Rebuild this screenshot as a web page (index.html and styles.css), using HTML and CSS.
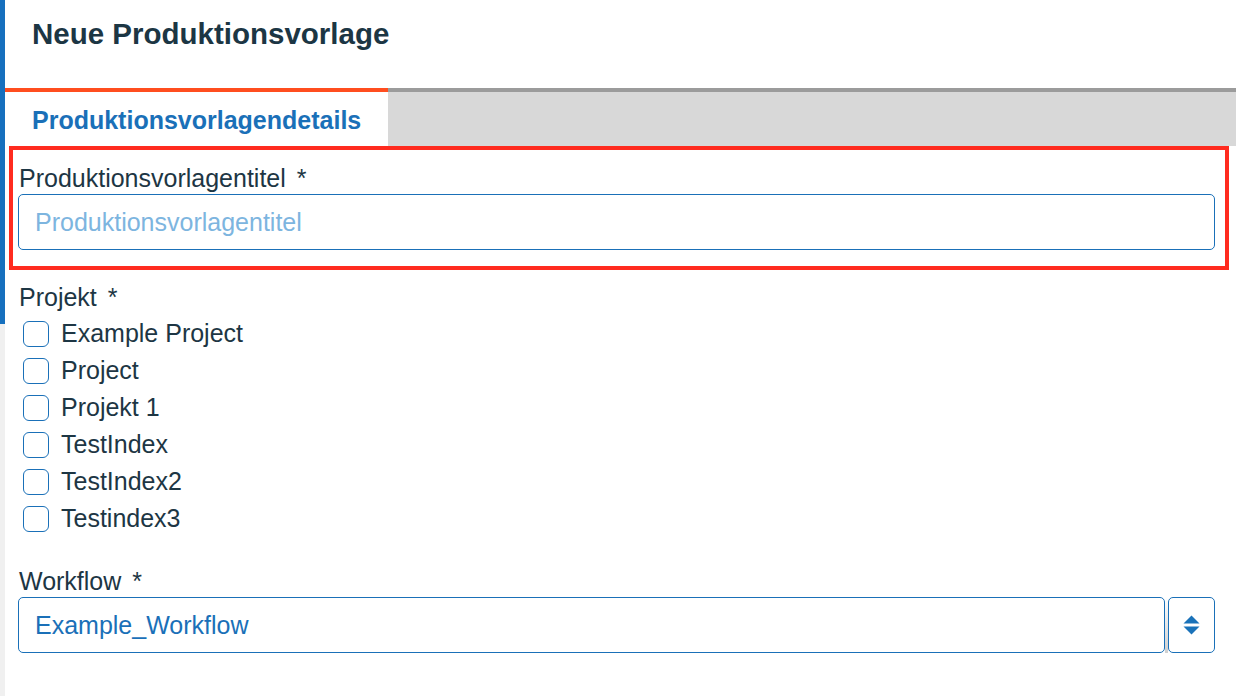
FILE: index.html
```html
<!DOCTYPE html>
<html lang="de">
<head>
<meta charset="utf-8">
<title>Neue Produktionsvorlage</title>
<link rel="stylesheet" href="styles.css">
</head>
<body>
<div class="page">
  <div class="rail"><div class="rail-active"></div></div>
  <main class="main">
    <header class="header">
      <h1 class="title">Neue Produktionsvorlage</h1>
    </header>
    <nav class="tabs">
      <div class="tab tab-active">Produktionsvorlagendetails</div>
      <div class="tab-rest"></div>
    </nav>
    <form class="form">
      <div class="field field-highlight">
        <label class="label" for="titel">Produktionsvorlagentitel <span class="req">*</span></label>
        <input class="input" id="titel" type="text" placeholder="Produktionsvorlagentitel">
      </div>
      <div class="field field-projects">
        <div class="label label-projects">Projekt <span class="req">*</span></div>
        <ul class="checks">
          <li class="check"><span class="box"></span>Example Project</li>
          <li class="check"><span class="box"></span>Project</li>
          <li class="check"><span class="box"></span>Projekt 1</li>
          <li class="check"><span class="box"></span>TestIndex</li>
          <li class="check"><span class="box"></span>TestIndex2</li>
          <li class="check"><span class="box"></span>Testindex3</li>
        </ul>
      </div>
      <div class="field field-workflow">
        <div class="label">Workflow <span class="req">*</span></div>
        <div class="select">
          <div class="select-value">Example_Workflow</div>
          <div class="select-sep"></div>
          <div class="select-btn">
            <svg class="select-icon" width="17" height="20" viewBox="0 0 17 20"><path d="M8.5 0.5 L16.5 8.5 L0.5 8.5 Z M0.5 11.5 L16.5 11.5 L8.5 19.5 Z" fill="#1a72b9"/></svg>
          </div>
        </div>
      </div>
    </form>
  </main>
</div>
</body>
</html>
```

FILE: styles.css
```css
* { box-sizing: border-box; }
html, body { margin: 0; padding: 0; background: #fff; }
body {
  font-family: "Liberation Sans", Arial, Helvetica, sans-serif;
  color: #1d3644;
}
.page { display: flex; min-height: 696px; }
.rail { width: 5px; background: #f0f0f0; flex: none; }
.rail-active { height: 324px; background: #1670be; }
.main { flex: 1; min-width: 0; }
.header { height: 88px; padding: 17px 0 0 27px; }
.title { margin: 0; font-size: 29.5px; line-height: 34px; font-weight: bold; color: #1c3644; }
.tabs { display: flex; height: 58px; }
.tab { display: flex; align-items: center; }
.tab-active {
  width: 383px; padding-left: 27px; padding-top: 2px;
  border-top: 4px solid #ff4d1f; background: #fff;
  color: #1a70b8; font-weight: bold; font-size: 25px;
}
.tab-rest { flex: 1; border-top: 4px solid #9b9b9b; background: #d8d8d8; }
.form { padding: 18px 21px 0 13px; }
.field { display: flex; flex-direction: column; }
.label { font-size: 25px; line-height: 28px; margin-left: 1px; margin-bottom: 2px; }
.label-projects { margin-bottom: 4px; }
.req { margin-left: 4px; }
.field-highlight { position: relative; padding-bottom: 20px; }
.field-highlight::after {
  content: ""; position: absolute; left: -9px; right: -14px; top: -18px; bottom: 0;
  border: 4px solid #ff2b1f; pointer-events: none;
}
.input {
  height: 56px; border: 1px solid #1a70b8; border-radius: 5px;
  padding: 0 16px; font: inherit; font-size: 25px; color: #1d3644; outline: none;
}
.input::placeholder { color: #7db5df; }
.field-projects { margin-top: 13px; }
.checks { list-style: none; margin: 0; padding: 0; }
.check { display: flex; align-items: center; height: 37px; font-size: 25px; }
.box {
  width: 26px; height: 26px; border: 1px solid #1a70b8; border-radius: 6px;
  margin-left: 5px; margin-right: 12px; flex: none;
}
.field-workflow { margin-top: 30px; }
.select { display: flex; height: 56px; }
.select-value {
  flex: 1; display: flex; align-items: center; padding-left: 16px;
  border: 1px solid #1a70b8; border-radius: 5px; color: #1a70b8; font-size: 25px;
}
.select-sep { width: 3px; background: linear-gradient(to bottom, #fff, #cfcfcf); }
.select-btn {
  width: 47px; display: flex; align-items: center; justify-content: center;
  border: 1px solid #1a70b8; border-radius: 5px;
}
.select-icon { display: block; }
```
